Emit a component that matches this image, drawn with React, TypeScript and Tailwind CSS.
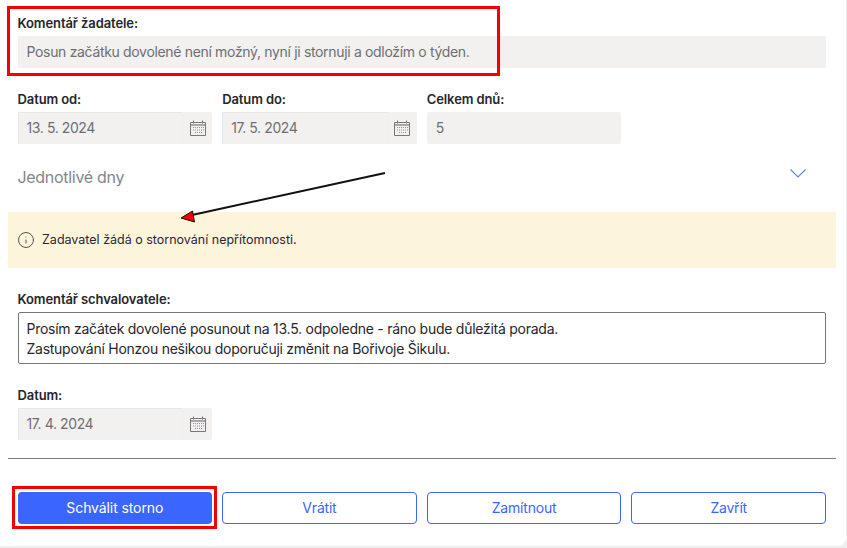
import { Info } from 'lucide-react';

const CalendarIcon = () => (
  <svg width="16" height="16" viewBox="0 0 16 16" fill="none" className="text-[#77777a]">
    <path d="M.5 2.5h15v13H.5z" stroke="currentColor" />
    <path d="M1 5h14" stroke="currentColor" strokeWidth="1.2" />
    <path d="M3.5 .5v3M12.5 .5v3" stroke="currentColor" />
    <path
      d="M3 7h1v1H3zM5 7h1v1H5zM7 7h1v1H7zM9 7h1v1H9zM11 7h1v1h-1zM13 7h1v1h-1zM3 9.5h1v1H3zM5 9.5h1v1H5zM7 9.5h1v1H7zM9 9.5h1v1H9zM11 9.5h1v1h-1zM13 9.5h1v1h-1zM5 12h1v1H5zM7 12h1v1H7zM9 12h1v1H9zM11 12h1v1h-1z"
      fill="currentColor"
      opacity="0.8"
    />
  </svg>
);

const Label = ({ children }: { children: string }) => (
  <div className="h-[18px] text-[13px] leading-[18px] font-semibold tracking-[-0.1px] text-[#26262b]">{children}</div>
);

const DateField = ({ label, value }: { label: string; value: string }) => (
  <div className="flex flex-col gap-[4px]">
    <Label>{label}</Label>
    <div className="flex h-8 bg-[#f2f1ef] rounded-[2px]">
      <div className="flex-1 pl-[8px] text-sm leading-[30px] tracking-[-0.4px] text-[#6e6e74] border-t border-l border-[#e8e7e5]">
        {value}
      </div>
      <div className="w-[30px] flex items-center justify-center border-l border-[#efeeec]">
        <CalendarIcon />
      </div>
    </div>
  </div>
);

const OutlineButton = ({ children }: { children: string }) => (
  <button className="h-8 rounded-[4px] border border-[#3a66ff] bg-white text-sm tracking-[-0.2px] text-[#3a66ff]">
    {children}
  </button>
);

export default function App() {
  return (
    <div className="relative w-[847px] h-[548px] bg-[#efefef] overflow-hidden font-['Inter',sans-serif]">
      <div className="w-[846px] h-[546px] bg-white rounded-br-lg pl-2 pr-[10px] pt-[14px]">
        <div className="pl-[9.5px] pr-[10px]">
          <Label>Komentář žadatele:</Label>
          <div className="mt-[4px] h-8 bg-[#f2f1ef] rounded-[2px] pl-[9px] text-sm leading-8 tracking-[-0.33px] text-[#6e6e74]">
            Posun začátku dovolené není možný, nyní ji stornuji a odložím o týden.
          </div>

          <div className="mt-[22px] grid grid-cols-4 gap-x-[10px]">
            <DateField label="Datum od:" value="13. 5. 2024" />
            <DateField label="Datum do:" value="17. 5. 2024" />
            <div className="flex flex-col gap-[4px]">
              <Label>Celkem dnů:</Label>
              <div className="h-8 bg-[#f2f1ef] rounded-[2px] pl-[9px] text-sm leading-8 text-[#6e6e74]">5</div>
            </div>
          </div>

          <div className="mt-[20px] h-[26px] flex items-center justify-between pr-[20px]">
            <span className="text-base tracking-[-0.3px] text-[#85858b]">Jednotlivé dny</span>
            <svg width="16" height="9" viewBox="0 0 16 9" fill="none" className="-mt-[7px]">
              <path d="M.5 .5 8 8 15.5 .5" stroke="#5f80ff" strokeWidth="1.1" />
            </svg>
          </div>
        </div>

        <div className="mt-[22px] h-[56px] bg-[#fcf4db] flex items-center gap-[7px] pl-[9px]">
          <Info className="w-[18px] h-[18px] text-[#55534e]" strokeWidth={1.3} />
          <span className="text-[12.5px] text-[#2c2630]">Zadavatel žádá o stornování nepřítomnosti.</span>
        </div>

        <div className="pl-[9.5px] pr-[10px] mt-[22px]">
          <Label>Komentář schvalovatele:</Label>
          <div className="mt-[4px] h-[52px] border border-[#77777a] rounded-[2px] pl-[8px] pt-[6px] text-sm leading-[20px] tracking-[-0.26px] text-[#26262b]">
            <div>Prosím začátek dovolené posunout na 13.5. odpoledne - ráno bude důležitá porada.</div>
            <div>Zastupování Honzou nešikou doporučuji změnit na Bořivoje Šikulu.</div>
          </div>

          <div className="mt-[22px] grid grid-cols-4 gap-x-[10px]">
            <DateField label="Datum:" value="17. 4. 2024" />
          </div>
        </div>

        <div className="mt-[18px] border-t border-[#7c7c7c]" />

        <div className="pl-[9.5px] pr-[10px] mt-[33px] grid grid-cols-4 gap-x-[10px]">
          <button className="h-8 rounded-[4px] bg-[#3a66ff] text-sm tracking-[-0.1px] text-white">Schválit storno</button>
          <OutlineButton>Vrátit</OutlineButton>
          <OutlineButton>Zamítnout</OutlineButton>
          <OutlineButton>Zavřít</OutlineButton>
        </div>
      </div>

      {/* annotations drawn over the screenshot */}
      <div className="absolute left-[7px] top-[6px] w-[493px] h-[70px] border-[3px] border-[#f50000]" />
      <div className="absolute left-[12px] top-[486px] w-[205px] h-[43px] border-[3px] border-[#f50000]" />
      <svg className="absolute left-0 top-0 pointer-events-none" width="847" height="548">
        <path d="M385 173 L192 215" stroke="#111" strokeWidth="2" />
        <path d="M181 218 L192.5 211 L194.5 222 Z" fill="#f50000" stroke="#111" strokeWidth="1" />
      </svg>
    </div>
  );
}
